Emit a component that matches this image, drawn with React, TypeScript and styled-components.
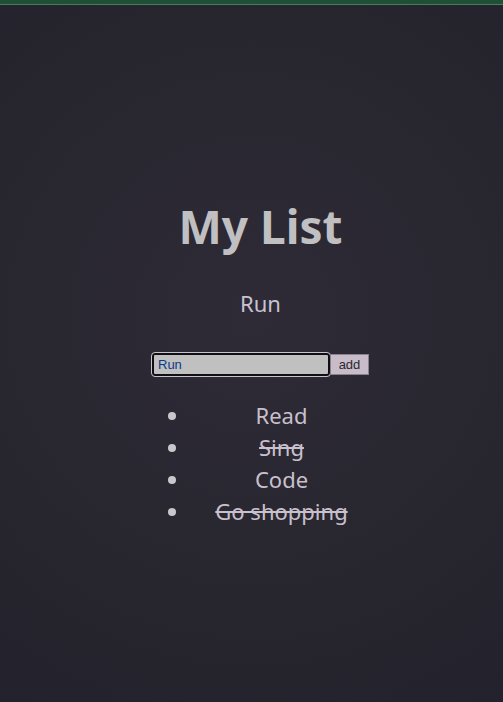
import styled, { createGlobalStyle } from "styled-components";

const GlobalStyle = createGlobalStyle`
  html, body {
    margin: 0;
    padding: 0;
    height: 100%;
  }
  body {
    background: radial-gradient(circle at 50% 45%, #2e2b37 0%, #28262f 55%, #23212b 100%);
    font-family: "Noto Sans", "Open Sans", sans-serif;
    overflow: hidden;
  }
`;

const items = [
  { text: "Read", done: false },
  { text: "Sing", done: true },
  { text: "Code", done: false },
  { text: "Go shopping", done: true },
];

export default function App() {
  return (
    <>
      <GlobalStyle />
      <TopBar />
      <Page>
        <Title>My List</Title>
        <Current>Run</Current>
        <Form onSubmit={(e) => e.preventDefault()}>
          <Input defaultValue="Run" />
          <AddButton type="submit">add</AddButton>
        </Form>
        <List>
          {items.map((item) => (
            <Item key={item.text} $done={item.done}>
              {item.text}
            </Item>
          ))}
        </List>
      </Page>
    </>
  );
}

const TopBar = styled.div`
  height: 4px;
  background: #1d5035;
  border-bottom: 1px solid #4c7a5e;
`;

const Page = styled.main`
  display: flex;
  flex-direction: column;
  align-items: center;
  padding: 189px 0 0 18px;
`;

const Title = styled.h1`
  margin: 0;
  font-size: 46px;
  font-weight: 700;
  line-height: 64px;
  color: #c0c0c2;
`;

const Current = styled.p`
  margin: 30px 0 0;
  font-size: 22px;
  line-height: 30px;
  color: #c8c2d0;
`;

const Form = styled.form`
  display: flex;
  align-items: center;
  margin-top: 35px;
`;

const Input = styled.input`
  box-sizing: border-box;
  width: 178px;
  height: 23px;
  padding: 0 4px;
  border: 2px solid #101014;
  border-radius: 3px;
  outline: 1px solid #c9c3cf;
  background: #c0c0c0;
  color: #0a3a8a;
  font-family: "Liberation Sans", Arial, sans-serif;
  font-size: 13px;
`;

const AddButton = styled.button`
  box-sizing: border-box;
  width: 39px;
  height: 21px;
  padding: 0;
  border: 1px solid #8a8290;
  background: #c8bcc8;
  color: #2a2830;
  font-family: "Liberation Sans", Arial, sans-serif;
  font-size: 13px;
`;

const List = styled.ul`
  box-sizing: border-box;
  width: 228px;
  margin: 23px 5px 0 0;
  padding-left: 47px;
  color: #c8c0cc;
`;

const Item = styled.li<{ $done: boolean }>`
  font-size: 22px;
  line-height: 32px;
  text-align: center;
  text-decoration: ${(p) => (p.$done ? "line-through" : "none")};
  &::marker {
    color: #c8c8cc;
  }
`;
